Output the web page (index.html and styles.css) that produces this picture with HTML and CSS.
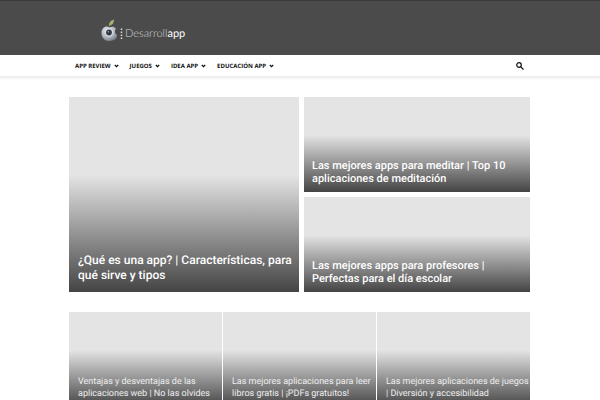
FILE: index.html
```
<!DOCTYPE html>
<html lang="es">
<head>
<meta charset="utf-8">
<title>Desarrollapp</title>
<link rel="stylesheet" href="styles.css">
</head>
<body>
<header class="top">
  <div class="wrap brand">
    <a class="logo" href="#">
      <svg class="logo-mark" viewBox="0 0 24 24" aria-hidden="true">
        <defs>
          <radialGradient id="metal" cx=".4" cy=".3" r=".8">
            <stop offset="0" stop-color="#f2f3f6"/>
            <stop offset=".6" stop-color="#a9afb8"/>
            <stop offset="1" stop-color="#676e7b"/>
          </radialGradient>
        </defs>
        <path d="M9 7.500C8.800 3.500 10.500 1.500 14 .5C14 4 12.500 6 9.800 6.500Z" fill="#9db56f"/>
        <path d="M9.500 8.500C6 6 1.500 8.500 1.500 14C1.500 18.500 4.500 22 9 22C14.500 22 17.500 19 17 16C14.500 14.500 14.500 11.500 16 9.500C14 7 11 7.500 9.500 8.500Z" fill="url(#metal)"/>
        <circle cx="9" cy="13.500" r="4.200" fill="#d5dae2"/>
        <circle cx="9" cy="13.500" r="2.900" fill="#343a48"/>
        <circle cx="8.300" cy="12.700" r=".8" fill="#8ca0c0"/>
        <path d="M21.500 9.500V20" stroke="#ddd" stroke-width="1.500" stroke-dasharray="1.500 1.500"/>
      </svg>
      <span class="logo-text">Desarroll<b>app</b></span>
    </a>
  </div>
</header>
<nav class="bar">
  <div class="wrap bar-row">
    <ul class="menu">
      <li><a href="#">APP REVIEW<svg viewBox="0 0 6 4" aria-hidden="true"><path d="M1 .8L3 2.800L5 .8"/></svg></a></li>
      <li><a href="#">JUEGOS<svg viewBox="0 0 6 4" aria-hidden="true"><path d="M1 .8L3 2.800L5 .8"/></svg></a></li>
      <li><a href="#">IDEA APP<svg viewBox="0 0 6 4" aria-hidden="true"><path d="M1 .8L3 2.800L5 .8"/></svg></a></li>
      <li><a href="#">EDUCACIÓN APP<svg viewBox="0 0 6 4" aria-hidden="true"><path d="M1 .8L3 2.800L5 .8"/></svg></a></li>
    </ul>
    <button class="search" type="button" aria-label="Buscar">
      <svg viewBox="0 0 8 8" aria-hidden="true"><circle cx="3" cy="3" r="2.300"/><path d="M4.800 4.800L7.500 7.500"/></svg>
    </button>
  </div>
</nav>
<main class="wrap">
  <section class="featured">
    <a class="card card-large" href="#"><h2>¿Qué es una app? | Características, para qué sirve y tipos</h2></a>
    <a class="card card-medium" href="#"><h3>Las mejores apps para meditar | Top 10 aplicaciones de meditación</h3></a>
    <a class="card card-medium" href="#"><h3>Las mejores apps para profesores | Perfectas para el día escolar</h3></a>
  </section>
  <section class="trio">
    <a class="card card-small" href="#"><h3>Ventajas y desventajas de las aplicaciones web | No las olvides</h3></a>
    <a class="card card-small" href="#"><h3>Las mejores aplicaciones para leer libros gratis | ¡PDFs gratuitos!</h3></a>
    <a class="card card-small" href="#"><h3>Las mejores aplicaciones de juegos | Diversión y accesibilidad</h3></a>
  </section>
</main>
</body>
</html>
```
FILE: styles.css
```
* { box-sizing: border-box; }
body { margin: 0; background: #fff; font-family: Roboto, sans-serif; text-rendering: geometricPrecision; }
a { color: inherit; text-decoration: none; }
h2, h3 { margin: 0; }

.wrap { width: 77%; max-width: 1068px; margin: 0 auto; }

.top { background: #4b4b4b; border-top: 1px solid #3a3a3a; padding: 18px 0 12px; }
.brand { display: flex; }
.logo { display: flex; align-items: center; gap: 1px; height: 24px; margin-left: 31px; }
.logo-mark { width: 24px; height: 24px; }
.logo-text { color: #d6d6d6; font: 300 11px/20px Lato, sans-serif; padding-top: 6px; }
.logo-text b { color: #fff; font-weight: 400; }

.bar { border-bottom: 2px solid #efefef; box-shadow: 0 1px 2px rgba(0, 0, 0, .04); }
.bar-row { display: flex; align-items: center; justify-content: space-between; height: 21px; }
.menu { display: flex; gap: 11px; margin: 0; padding: 0 0 0 6px; list-style: none; }
.menu a { display: flex; align-items: center; gap: 3px; color: #111; font: 700 6px/20px "Open Sans", sans-serif; }
.menu svg { width: 5px; height: 4px; fill: none; stroke: #111; stroke-width: 1.5; }
.search { display: flex; margin: 0 7px 0 0; padding: 0; border: 0; background: none; }
.search svg { width: 8px; height: 8px; fill: none; stroke: #111; stroke-width: 1.2; }

.featured, .trio { display: grid; margin: 19px 1px 0 0; }
.featured { grid-template-columns: 230fr 226fr; grid-auto-rows: minmax(95px, auto); gap: 5px; }
.trio { grid-template-columns: repeat(3, 1fr); grid-auto-rows: minmax(95px, auto); gap: 1px; margin-top: 20px; }
.card { display: flex; align-items: flex-end; color: #fff; background: linear-gradient(to bottom, rgba(0, 0, 0, 0) 40%, rgba(0, 0, 0, .7) 100%) #e4e4e4; }
.card-large { grid-row: span 2; padding: 9px 4px 9px 9px; }
.card-large h2 { font-size: 12px; font-weight: 500; line-height: 15px; }
.card-medium { padding: 7px 8px; }
.card-medium h3 { font-size: 11px; font-weight: 500; line-height: 13px; }
.card-small { padding: 7px 0 7px 9px; }
.card-small h3 { color: #ededed; font-size: 9px; font-weight: 400; line-height: 12px; }
```
